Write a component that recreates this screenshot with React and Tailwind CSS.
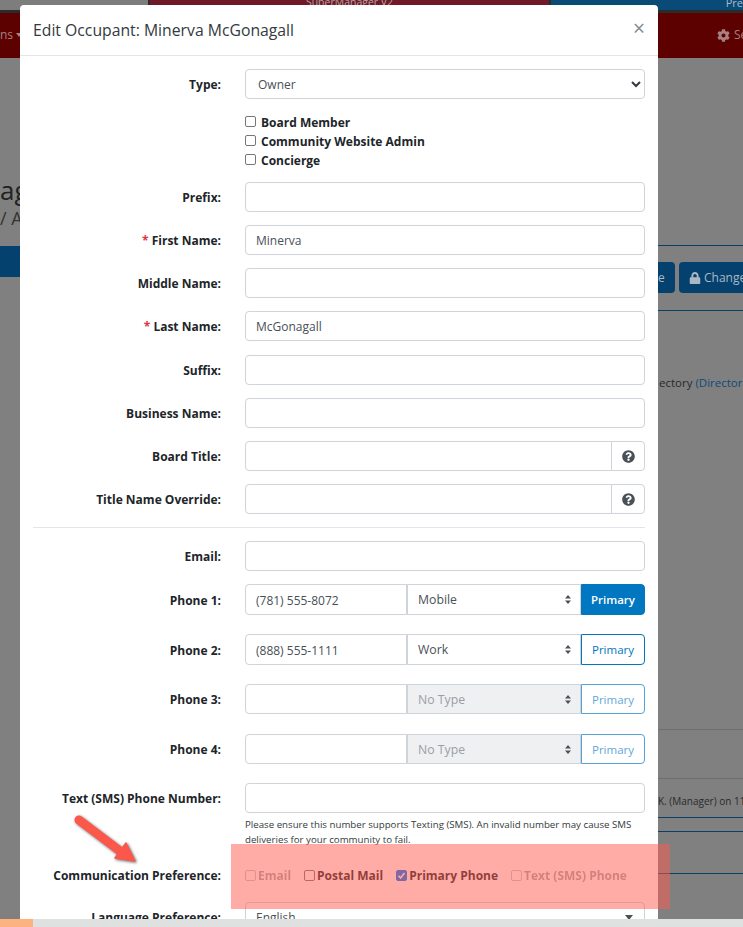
import React from "react";
import { FaQuestionCircle, FaLock, FaCog } from "react-icons/fa";

const inputCls =
  "h-[30px] w-full rounded-[4px] border border-[#ced4da] bg-white px-[10px] pt-[1px] text-[12px] text-[#495057] outline-none";

function Label({ children, req }) {
  return (
    <div className="w-[188px] shrink-0 whitespace-nowrap pt-[2px] text-right text-[12px] font-bold leading-[18px] text-[#212529]">
      {req && <span className="text-[#dc3545]">* </span>}
      {children}
    </div>
  );
}

function Row({ label, req, children, className }) {
  return (
    <div className={"flex items-center gap-[24px] " + (className || "")}>
      <Label req={req}>{label}</Label>
      <div className="w-[400px] shrink-0">{children}</div>
    </div>
  );
}

function TextRow({ label, req, value, className }) {
  return (
    <Row label={label} req={req} className={className}>
      <input readOnly value={value || ""} className={inputCls} />
    </Row>
  );
}

function HelpRow({ label, className }) {
  return (
    <Row label={label} className={className}>
      <div className="flex h-[30px] rounded-[4px] border border-[#ced4da]">
        <div className="flex-1" />
        <div className="flex w-[33px] items-center justify-center border-l border-[#ced4da] text-[#495057]">
          <FaQuestionCircle size={13} />
        </div>
      </div>
    </Row>
  );
}

function Updown() {
  return (
    <svg width="6" height="9" viewBox="0 0 6 9" className="absolute right-[9px] top-[10px]" fill="#495057">
      <path d="M3 0 6 3.5H0Z" />
      <path d="M3 9 0 5.5H6Z" />
    </svg>
  );
}

function PhoneRow({ label, phone, type, state, className, tall }) {
  const disabled = state === "disabled";
  return (
    <Row label={label} className={className}>
      <div className={"flex " + (tall ? "h-[31px]" : "h-[30px]")}>
        <input
          readOnly
          value={phone || ""}
          className="h-full w-[162px] rounded-l-[4px] border border-[#ced4da] bg-white px-[10px] pt-[1px] text-[12px] text-[#495057] outline-none"
        />
        <div
          className={
            "relative flex h-full w-[174px] items-center border border-[#ced4da] pl-[10px] pt-[2px] text-[12.25px] " +
            (disabled ? "bg-[#eff0f2] text-[#9a9fa5]" : "bg-white text-[#495057]")
          }
        >
          {type}
          <Updown />
        </div>
        <button
          className={
            "h-full w-[64px] rounded-r-[4px] border pt-[1px] text-[11.5px] " +
            (state === "active"
              ? "border-[#0077c0] bg-[#0077c0] font-semibold text-white"
              : disabled
              ? "border-[#55a3d6] bg-white text-[#62a8d8]"
              : "border-[#0077c0] bg-white text-[#0077c0]")
          }
        >
          Primary
        </button>
      </div>
    </Row>
  );
}

function Check({ label, checked, faded, wide }) {
  return (
    <label
      className={
        "flex items-center whitespace-nowrap text-[12px] font-bold leading-[19px] text-[#212529] " +
        (wide ? "gap-[5px] " : "gap-[2px] ") +
        (faded ? "opacity-40" : "")
      }
    >
      <span
        className={
          "relative flex h-[11px] w-[11px] shrink-0 items-center justify-center rounded-[2px] border " +
          (wide ? "mb-[2px] " : "") +
          (checked ? "border-[#0075ff] bg-[#0075ff]" : "border-[#767676] bg-white")
        }
      >
        {checked && (
          <svg width="9" height="9" viewBox="0 0 9 9" fill="none" stroke="white" strokeWidth="1.6">
            <path d="M1.5 4.8 3.6 7 7.5 2" />
          </svg>
        )}
      </span>
      {label}
    </label>
  );
}

function Background() {
  return (
    <div className="absolute inset-0 flex flex-col bg-[#808080] text-[#333]">
      <div className="flex h-[10px] items-start overflow-hidden bg-[#7d7d7d]">
        <div className="w-[148px]" />
        <div className="h-full w-[2px] bg-[#2b2b2b]" />
        <div className="flex h-full w-[399px] justify-center bg-[#6f1a26] text-[10.5px] leading-[5px] text-[#b5a3a6]">SuperManager V2</div>
        <div className="h-full w-[2px] bg-[#2b2b2b]" />
        <div className="flex h-full flex-1 justify-end bg-[#0a4a77] text-[11px] leading-[5px] text-[#a9bccb]">Pre</div>
      </div>
      <div className="h-[3px] bg-[#2b2b2b]" />
      <div className="flex h-[45px] items-center justify-between bg-[#5c0000] pb-[1px] text-[12px] text-[#a98080]">
        <div className="flex items-center gap-[3px]">
          <span>ns</span>
          <span className="h-0 w-0 border-x-[3px] border-t-[4px] border-x-transparent border-t-[#a98080]" />
        </div>
        <div className="flex items-center gap-[4px]">
          <FaCog size={13} />
          <span className="w-[9px] overflow-hidden">Se</span>
        </div>
      </div>
      <div className="mt-[116px] text-[26px] leading-[32px] text-[#222]">ag</div>
      <div className="text-[18px] leading-[24px] text-[#333]">/ A</div>
      <div className="mt-[15px] flex h-[66px] items-start justify-between">
        <div className="mt-[1px] h-[31px] w-[20px] bg-[#04416e]" />
        <div className="h-full w-[85px] border-y border-[#0a3f66] pt-[16px]">
          <div className="flex h-[31px] gap-[4px] text-[12px] text-[#a9b8c5]">
            <div className="flex w-[17px] items-center rounded-r-[4px] bg-[#04416e]">e</div>
            <div className="flex flex-1 items-center gap-[3px] overflow-hidden rounded-l-[4px] bg-[#04416e] pl-[10px]">
              <FaLock size={12} className="shrink-0" />
              Change
            </div>
          </div>
        </div>
      </div>
      <div className="mt-[63px] flex justify-end text-[11.5px] leading-[18px] text-[#2a2a2a]">
        <span className="w-[84px] overflow-hidden whitespace-nowrap">
          ectory <span className="text-[#0d4a78]">(Director</span>
        </span>
      </div>
      <div className="mt-[337px] ml-auto flex h-[50px] w-[85px] border-y border-[#6e6e6e]" />
      <div className="ml-auto w-[85px] overflow-hidden whitespace-nowrap pt-[14px] text-[10px] leading-[16px] text-[#2a2a2a]">K. (Manager) on 11</div>
      <div className="ml-auto mt-[8px] h-[15px] w-[85px] border-y border-[#0a3f66]" />
      <div className="ml-auto mt-[41px] h-px w-[85px] bg-[#0a3f66]" />
    </div>
  );
}

function Arrow() {
  return (
    <svg
      width="80"
      height="66"
      viewBox="0 0 80 66"
      className="absolute left-[68px] top-[808px] drop-shadow-[1px_1px_1.5px_rgba(0,0,0,0.6)]"
    >
      <path d="M11 12 52 43" stroke="#fb574b" strokeWidth="9" strokeLinecap="round" />
      <path d="M58 35 67 53 47 50Z" fill="#fb574b" stroke="#fb574b" strokeWidth="1.5" strokeLinejoin="round" />
    </svg>
  );
}

export default function App() {
  return (
    <div
      className="relative h-[927px] w-[743px] overflow-hidden"
      style={{ fontFamily: '"Open Sans", "Noto Sans", sans-serif' }}
    >
      <Background />

      <div className="absolute left-[20px] top-[5px] w-[638px] rounded-t-[4px] bg-white">
        <div className="flex h-[51px] items-center justify-between border-b border-[#e3e6e9] pl-[13px] pr-[13px]">
          <h5 className="text-[15.75px] font-normal leading-[22px] text-[#343a40]">Edit Occupant: Minerva McGonagall</h5>
          <span className="mb-[3px] text-[21px] leading-none text-[#85898d]">×</span>
        </div>

        <div className="pl-[13px] pr-[13px] pt-[13px]">
          <Row label="Type:">
            <div className="relative">
              <select className={inputCls + " appearance-none pl-[12px]"} defaultValue="Owner">
                <option>Owner</option>
              </select>
              <svg width="10" height="7" viewBox="0 0 10 7" fill="none" stroke="#343a40" strokeWidth="2" className="absolute right-[4px] top-[12px]">
                <path d="M1 1 5 5 9 1" />
              </svg>
            </div>
          </Row>

          <div className="ml-[212px] mt-[14px] flex flex-col">
            <Check wide label="Board Member" />
            <Check wide label="Community Website Admin" />
            <Check wide label="Concierge" />
          </div>

          <TextRow label="Prefix:" className="mt-[12px]" />
          <TextRow label="First Name:" req value="Minerva" className="mt-[13px]" />
          <TextRow label="Middle Name:" className="mt-[13px]" />
          <TextRow label="Last Name:" req value="McGonagall" className="mt-[13px]" />
          <TextRow label="Suffix:" className="mt-[14px]" />
          <TextRow label="Business Name:" className="mt-[13px]" />
          <HelpRow label="Board Title:" className="mt-[13px]" />
          <HelpRow label="Title Name Override:" className="mt-[13px]" />

          <div className="mt-[13px] h-px bg-[#e3e6e9]" />

          <TextRow label="Email:" className="mt-[13px]" />
          <PhoneRow label="Phone 1:" phone="(781) 555-8072" type="Mobile" state="active" tall className="mt-[13px]" />
          <PhoneRow label="Phone 2:" phone="(888) 555-1111" type="Work" tall className="mt-[19px]" />
          <PhoneRow label="Phone 3:" type="No Type" state="disabled" className="mt-[19px]" />
          <PhoneRow label="Phone 4:" type="No Type" state="disabled" className="mt-[20px]" />
          <TextRow label="Text (SMS) Phone Number:" className="mt-[19px]" />

          <div className="ml-[212px] mt-[4px] w-[400px] whitespace-nowrap text-[9.7px] leading-[15px] text-[#333a40]">
            Please ensure this number supports Texting (SMS). An invalid number may cause SMS
            <br />
            deliveries for your community to fail.
          </div>

          <div className="mt-[17px] flex items-center gap-[24px]">
            <Label>Communication Preference:</Label>
            <div className="flex gap-[13px] pt-[2px]">
              <Check label="Email" faded />
              <Check label="Postal Mail" />
              <Check label="Primary Phone" checked />
              <Check label="Text (SMS) Phone" faded />
            </div>
          </div>

          <Row label="Language Preference:" className="mt-[17px]">
            <div className="relative">
              <input readOnly value="English" className={inputCls} />
              <span className="absolute right-[12px] top-[13px] h-0 w-0 border-x-[4px] border-t-[5px] border-x-transparent border-t-[#495057]" />
            </div>
          </Row>
        </div>
      </div>

      <Arrow />
      <div className="absolute left-[231px] top-[844px] h-[65px] w-[439px] bg-[#ff5a4d]/50" />

      <div className="absolute inset-x-0 bottom-0 flex h-[8px] bg-[#dfe1e1]">
        <div className="w-[33px] bg-[#fdb27f]" />
      </div>
    </div>
  );
}
